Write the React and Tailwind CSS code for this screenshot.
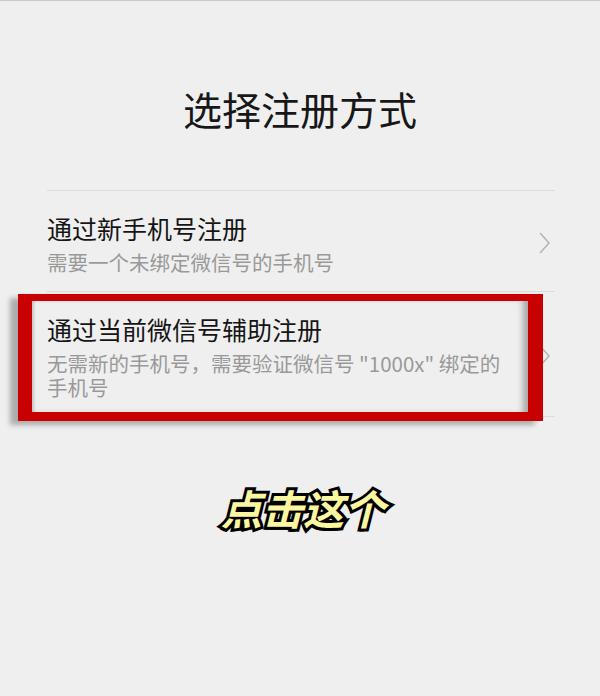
import React from "react";

const options = [
  {
    title: "通过新手机号注册",
    desc: "需要一个未绑定微信号的手机号",
  },
  {
    title: "通过当前微信号辅助注册",
    desc: '无需新的手机号，需要验证微信号 "1000x" 绑定的手机号',
    marked: true,
  },
];

function Chevron() {
  return (
    <svg width="12" height="22" viewBox="0 0 12 22" fill="none" className="shrink-0">
      <path d="M1.5 1.5 L10 11 L1.5 20.5" stroke="#b4b4b4" strokeWidth="1.6" strokeLinecap="round" strokeLinejoin="round" />
    </svg>
  );
}

export default function App() {
  return (
    <div
      className="relative w-full h-[696px] overflow-hidden bg-[#efefef] border-t border-[#c9c9c9]"
      style={{ fontFamily: '"Noto Sans CJK SC", "Noto Sans", sans-serif' }}
    >
      <h1 className="pt-[83px] text-center text-[39px] leading-[48px] font-normal text-[#171717]">
        选择注册方式
      </h1>

      {/* list of options */}
      <div className="mt-[58px] ml-[47px] mr-[45px] border-t border-[#dcdcdc]">
        {options.map((o) => (
          <div key={o.title} className="relative flex items-center border-b border-[#dcdcdc] pt-[21px] pb-[17px]">
            <div className="flex-1 min-w-0 mr-[36px] flex flex-col gap-[6px]">
              <div className="text-[25px] leading-[32px] text-[#151515]">{o.title}</div>
              <div className="text-[20.5px] leading-[24px] text-[#999999]">{o.desc}</div>
            </div>
            <div className="pr-[4px]">
              <Chevron />
            </div>
            {o.marked && (
              <div className="absolute left-[-29px] top-[2px] w-[525px] h-[127px] border-l-[14px] border-r-[15px] border-t-[7px] border-b-[9px] border-[#c80000] [box-shadow:-8px_4px_5px_rgba(0,0,0,0.28),inset_-8px_0_6px_-3px_rgba(0,0,0,0.3),inset_4px_0_3px_-2px_rgba(0,0,0,0.18)]" />
            )}
          </div>
        ))}
      </div>

      <div className="mt-[64px] text-center">
        <span className="inline-block ml-[6px] italic font-bold text-[41px] leading-[52px] text-[#fbf6a0] [-webkit-text-stroke:6px_#000] [paint-order:stroke_fill] [text-shadow:-2px_3px_0_#000]">
          点击这个
        </span>
      </div>
    </div>
  );
}
